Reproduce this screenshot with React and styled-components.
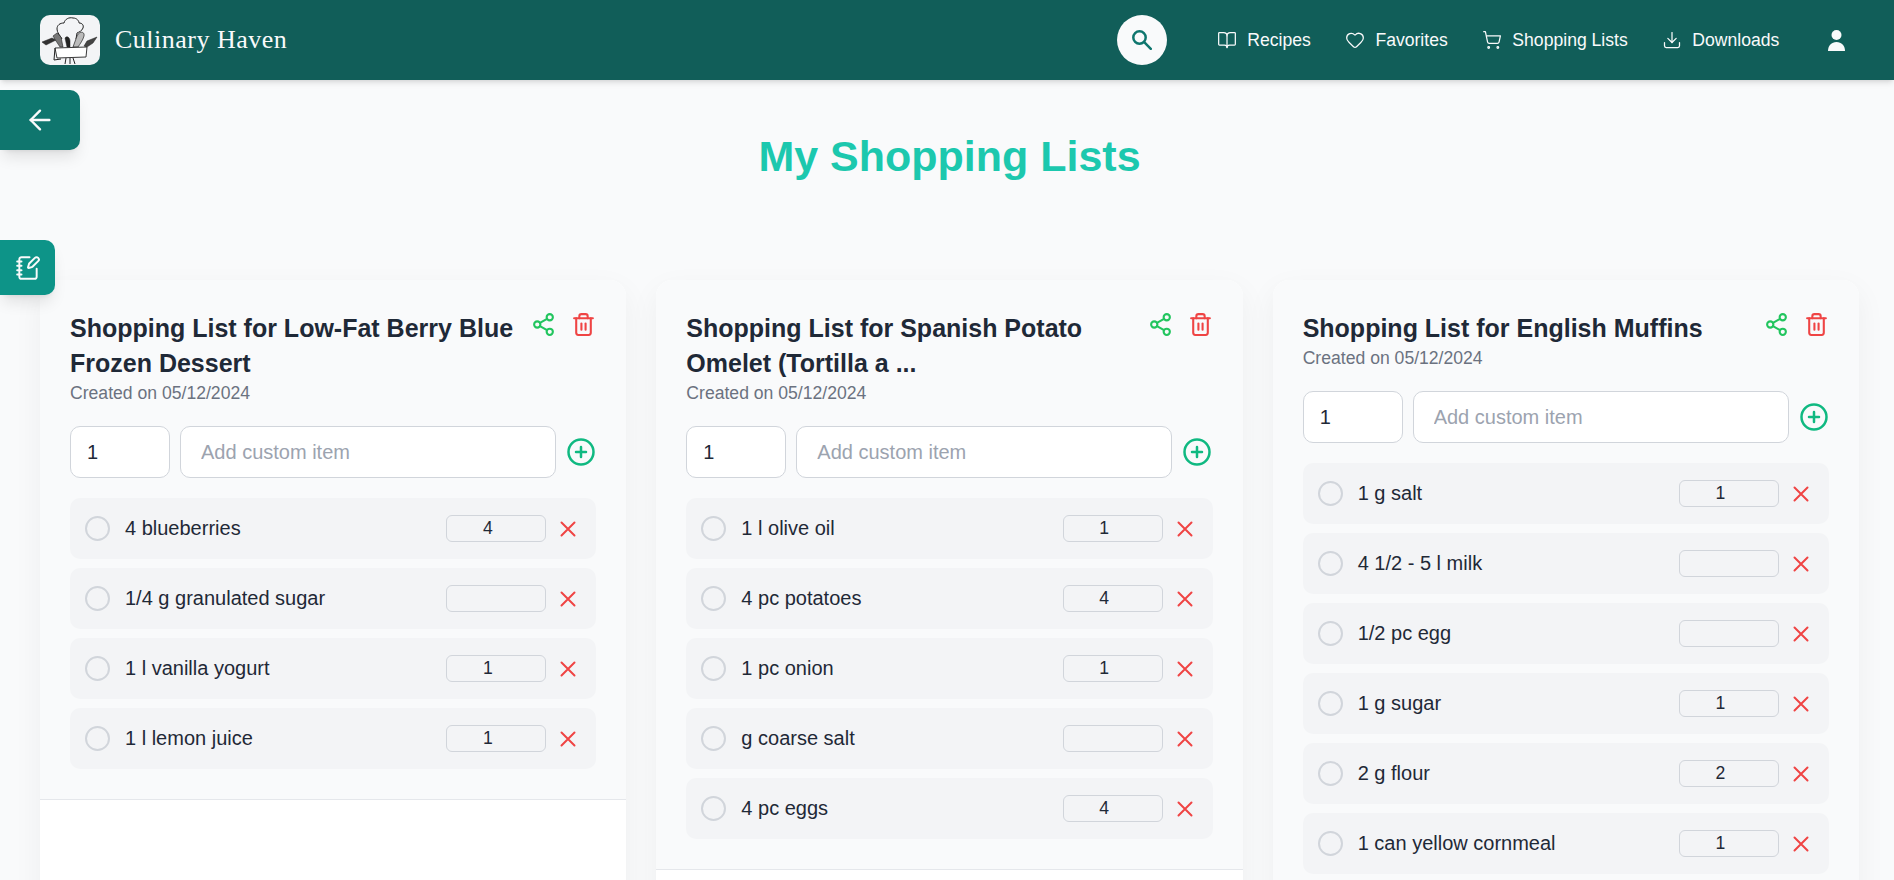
import React from 'react';
import styled, { createGlobalStyle } from 'styled-components';
import { ArrowLeft, BookOpen, Heart, ShoppingCart, Download, NotebookPen, Share2, Trash2, CirclePlus } from 'lucide-react';

const GlobalStyle = createGlobalStyle`
  html, body {
    margin: 0;
    height: 880px;
    overflow: hidden;
    background: #f9fafb;
    font-family: "Liberation Sans", Arial, sans-serif;
  }
  * { box-sizing: border-box; }
`;

const Navbar = styled.nav`
  height: 80px;
  background: #115e59;
  display: flex;
  align-items: center;
  padding: 0 49px 0 40px;
  box-shadow: 0 4px 6px -1px rgba(0, 0, 0, 0.1), 0 2px 4px -2px rgba(0, 0, 0, 0.1);
  position: relative;
  z-index: 2;
`;

const Brand = styled.div`
  display: flex;
  align-items: center;
  gap: 15px;
  margin-right: auto;
`;

const LogoBox = styled.div`
  width: 60px;
  height: 50px;
  border-radius: 10px;
  background: #f3f4f6;
  overflow: hidden;
`;

const BrandName = styled.span`
  color: #f9fafb;
  font-family: "Liberation Serif", serif;
  font-size: 26px;
  letter-spacing: 0.5px;
`;

const SearchButton = styled.button`
  width: 50px;
  height: 50px;
  border-radius: 50%;
  border: none;
  background: #f9fafb;
  color: #0f766e;
  display: flex;
  align-items: center;
  justify-content: center;
  margin-right: 50px;
  padding: 0;
`;

const NavItem = styled.a`
  display: flex;
  align-items: center;
  gap: 10px;
  color: #f9fafb;
  font-size: 17.6px;
  margin-right: 34.6px;
`;

const UserIcon = styled.svg`
  margin-left: 14px;
  color: #f9fafb;
`;

const FloatButton = styled.button`
  position: fixed;
  left: 0;
  top: ${(p) => p.$top}px;
  width: ${(p) => p.$size[0]}px;
  height: ${(p) => p.$size[1]}px;
  border: none;
  border-radius: 0 10px 10px 0;
  background: ${(p) => p.$bg};
  color: #f9fafb;
  display: flex;
  align-items: center;
  justify-content: center;
  padding: 0;
  box-shadow: 0 10px 15px -3px rgba(0, 0, 0, 0.1), 0 4px 6px -4px rgba(0, 0, 0, 0.1);
  z-index: 3;
`;

const Page = styled.main`
  padding: 0 35px 0 40px;
`;

const Heading = styled.h1`
  margin: 0;
  height: 200px;
  padding-top: 47px;
  text-align: center;
  font-size: 43px;
  line-height: 58px;
  font-weight: 700;
  color: #1cc8ae;
`;

const Grid = styled.div`
  display: grid;
  grid-template-columns: repeat(3, 1fr);
  gap: 30px;
  align-items: start;
`;

const Card = styled.section`
  background: #fff;
  border-radius: 16px 16px 0 0;
  box-shadow: 0 10px 30px rgba(0, 0, 0, 0.05);
  min-height: 700px;
`;

const CardBody = styled.div`
  background: #f9fafb;
  border-bottom: 1px solid #e5e7eb;
  border-radius: 16px 16px 0 0;
  padding: 31px 30px 30px;
`;

const CardHeader = styled.div`
  display: flex;
  justify-content: space-between;
  align-items: flex-start;
  gap: 15px;
`;

const CardTitle = styled.h2`
  margin: 0;
  font-size: 25px;
  line-height: 35px;
  font-weight: 700;
  color: #1f2937;
`;

const CreatedOn = styled.div`
  font-size: 17.6px;
  line-height: 25px;
  color: #6b7280;
`;

const Actions = styled.div`
  display: flex;
  gap: 15px;
  flex-shrink: 0;
  margin-top: 1px;
`;

const AddRow = styled.div`
  display: flex;
  align-items: center;
  gap: 10px;
  margin: 20px 0;
`;

const TextInput = styled.input`
  height: 52px;
  width: ${(p) => p.$width}px;
  border: 1px solid #d1d5db;
  border-radius: 10px;
  background: #fff;
  padding: 0 ${(p) => p.$pad}px;
  font-family: inherit;
  font-size: 20px;
  color: #1f2937;
  outline: none;
  &::placeholder { color: #9ca3af; }
`;

const ItemList = styled.ul`
  list-style: none;
  margin: 0;
  padding: 0;
  display: flex;
  flex-direction: column;
  gap: 9px;
`;

const Item = styled.li`
  height: 61px;
  background: #f3f4f6;
  border-radius: 10px;
  display: flex;
  align-items: center;
  padding: 0 20px 0 15px;
`;

const Check = styled.span`
  width: 25px;
  height: 25px;
  border-radius: 50%;
  border: 2px solid #d1d5db;
  margin-right: 15px;
`;

const ItemName = styled.span`
  font-size: 20px;
  color: #1f2937;
  margin-right: auto;
`;

const QtyInput = styled.input`
  width: 100px;
  height: 27px;
  border: 1px solid #d1d5db;
  border-radius: 6px;
  background: transparent;
  padding: 0 17px 0 0;
  text-align: center;
  font-family: inherit;
  font-size: 17.6px;
  color: #1f2937;
  margin-right: 14px;
  outline: none;
`;

const RemoveIcon = styled.svg`
  color: #ef4444;
`;

const lists = [
  {
    title: 'Shopping List for Low-Fat Berry Blue Frozen Dessert',
    items: [['4 blueberries', '4'], ['1/4 g granulated sugar', ''], ['1 l vanilla yogurt', '1'], ['1 l lemon juice', '1']],
  },
  {
    title: 'Shopping List for Spanish Potato Omelet (Tortilla a ...',
    items: [['1 l olive oil', '1'], ['4 pc potatoes', '4'], ['1 pc onion', '1'], ['g coarse salt', ''], ['4 pc eggs', '4']],
  },
  {
    title: 'Shopping List for English Muffins',
    items: [['1 g salt', '1'], ['4 1/2 - 5 l milk', ''], ['1/2 pc egg', ''], ['1 g sugar', '1'], ['2 g flour', '2'], ['1 can yellow cornmeal', '1']],
  },
];

const navLinks = [
  ['Recipes', BookOpen],
  ['Favorites', Heart],
  ['Shopping Lists', ShoppingCart],
  ['Downloads', Download],
];

const Logo = () => (
  <svg width="60" height="50" viewBox="0 0 60 50" fill="none" stroke="#222">
    <path d="M22 24C20 20 17 18 17 14C17 10 20 8 24 8C25 4 29 2 33 3C37 3 39 6 39 8C42 8 44 10 43 13C42 16 39 17 37 18L36 24" strokeWidth="1" />
    <path d="M2 27L12 23L16 25L6 30Z" fill="#333" strokeWidth="0.5" />
    <path d="M13 21L17 18L21 22L23 32L20 32L16 26Z" fill="#777" strokeWidth="0.6" />
    <path d="M25 23C27 20 30 23 30 26L30 32L27 32Z" fill="#222" strokeWidth="0.5" />
    <path d="M33 32L37 21C39 16 45 16 44 21C43 25 40 29 38 32Z" fill="#bbb" strokeWidth="0.7" />
    <path d="M44 31L47 26L57 22L53 28L47 32Z" fill="#444" strokeWidth="0.5" />
    <path d="M15 33L47 32L46 42L17 43Z" fill="#fff" strokeWidth="0.9" />
    <path d="M15 33L14 45L21 44M26 43L25 49M30 43V49M33 43L35 49" strokeWidth="1" />
  </svg>
);

const Person = () => (
  <UserIcon width="17" height="21" viewBox="0 0 17 21" fill="currentColor">
    <circle cx="8.5" cy="5" r="5" />
    <path d="M0 21C0 15.500 3.500 12 8.500 12S17 15.500 17 21Z" />
  </UserIcon>
);

const Cross = () => (
  <RemoveIcon width="16" height="16" viewBox="0 0 16 16" fill="none" stroke="currentColor" strokeWidth="2" strokeLinecap="round">
    <path d="M1.500 1.500L14.500 14.500M14.500 1.500L1.500 14.500" />
  </RemoveIcon>
);

const ListCard = ({ list }) => (
  <Card>
    <CardBody>
      <CardHeader>
        <CardTitle>{list.title}</CardTitle>
        <Actions>
          <Share2 size={25} color="#22c55e" />
          <Trash2 size={25} color="#ef4444" />
        </Actions>
      </CardHeader>
      <CreatedOn>Created on 05/12/2024</CreatedOn>
      <AddRow>
        <TextInput $width={100} $pad={16} defaultValue="1" />
        <TextInput $width={376} $pad={20} placeholder="Add custom item" />
        <CirclePlus size={30} color="#10b981" />
      </AddRow>
      <ItemList>
        {list.items.map(([name, qty]) => (
          <Item key={name}>
            <Check />
            <ItemName>{name}</ItemName>
            <QtyInput defaultValue={qty} />
            <Cross />
          </Item>
        ))}
      </ItemList>
    </CardBody>
  </Card>
);

export default function App() {
  return (
    <>
      <GlobalStyle />
      <Navbar>
        <Brand>
          <LogoBox><Logo /></LogoBox>
          <BrandName>Culinary Haven</BrandName>
        </Brand>
        <SearchButton>
          <svg width="20" height="20" viewBox="0 0 20 20" fill="none" stroke="currentColor" strokeWidth="2.5" strokeLinecap="round">
            <circle cx="7.500" cy="7.500" r="6.200" />
            <path d="M12.200 12.200L18.800 18.800" />
          </svg>
        </SearchButton>
        {navLinks.map(([label, Icon]) => (
          <NavItem key={label}>
            <Icon size={20} strokeWidth={1.5} />
            {label}
          </NavItem>
        ))}
        <Person />
      </Navbar>
      <FloatButton $top={90} $size={[80, 60]} $bg="#0f766e">
        <ArrowLeft size={32} strokeWidth={1.8} />
      </FloatButton>
      <FloatButton $top={240} $size={[55, 55]} $bg="#0d9488">
        <NotebookPen size={26} strokeWidth={1.8} />
      </FloatButton>
      <Page>
        <Heading>My Shopping Lists</Heading>
        <Grid>
          {lists.map((list) => (
            <ListCard key={list.title} list={list} />
          ))}
        </Grid>
      </Page>
    </>
  );
}
